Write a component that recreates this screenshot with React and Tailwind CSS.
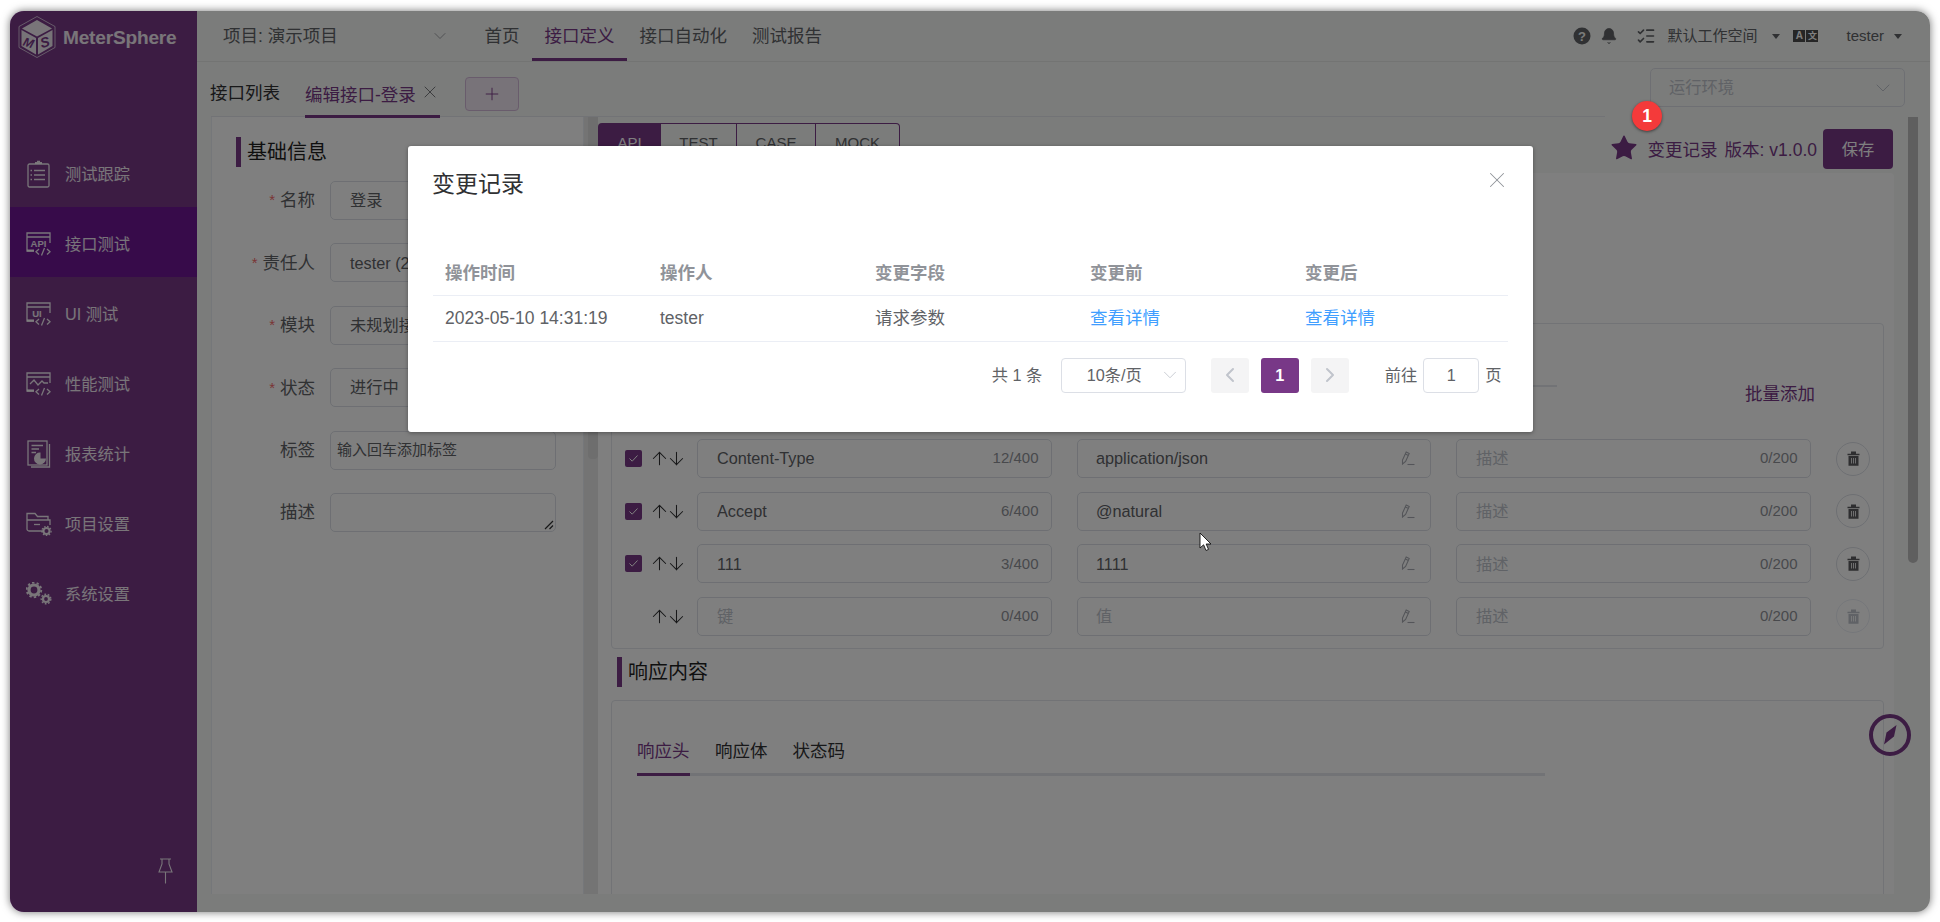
import React from "react";
import { ChevronDown, ChevronLeft, ChevronRight, X, Plus, ArrowUp, ArrowDown, Star, Bell, ListChecks } from "lucide-react";

const FONT = "font-['Liberation_Sans','Noto_Sans_CJK_SC',sans-serif]";

function Logo() {
  return (
    <svg width="40" height="44" viewBox="0 0 40 44" className="shrink-0">
      <path d="M20 1.5 L38 11.5 L38 32.5 L20 42.5 L2 32.5 L2 11.5 Z" fill="none" stroke="#fff" strokeOpacity="0.8" strokeWidth="0.8" />
      <path d="M20 5 L35 13.5 L20 21.5 L5 13.5 Z" fill="#fff" fillOpacity="0.9" />
      <path d="M4.5 15 L19 23 L19 39.5 L4.5 31 Z" fill="#fff" fillOpacity="0.88" />
      <path d="M21 23 L35.5 15 L35.5 31 L21 39.5 Z" fill="#fff" fillOpacity="0.88" />
      <text x="11.5" y="32" fontSize="12.5" fontWeight="700" fontStyle="italic" textAnchor="middle" fill="#783887" transform="rotate(18 11.5 28)" fontFamily="Liberation Sans">M</text>
      <text x="28" y="32" fontSize="14" fontWeight="700" fontStyle="italic" textAnchor="middle" fill="#783887" transform="rotate(-14 28 28)" fontFamily="Liberation Sans">S</text>
    </svg>
  );
}

const stroke = { fill: "none", stroke: "currentColor", strokeWidth: 1.3 };

function WinBase({ children }) {
  return (
    <svg width="26" height="24" viewBox="0 0 26 24">
      <path d="M8 19 H1 V1 H24 V11 M1 5 H24" {...stroke} />
      <path d="M1 18.5 H8" stroke="currentColor" strokeWidth="2.2" />
      <path d="M13 17 L10 19.7 L13 22.4 M21 17 L24 19.7 L21 22.4 M18.5 16 L15.5 23.5" {...stroke} />
      {children}
    </svg>
  );
}

const icons = {
  track: (
    <svg width="24" height="28" viewBox="0 0 24 28">
      <rect x="1" y="4" width="21" height="23" rx="1.5" {...stroke} />
      <path d="M8 4 V2 H10 V0.8 H13 V2 H15 V4 Z" fill="currentColor" />
      <path d="M7 10.5 H18 M7 15 H18 M7 19.5 H18 M3.5 10.5 H5 M3.5 15 H5 M3.5 19.5 H5" {...stroke} />
    </svg>
  ),
  api: (
    <WinBase>
      <text x="12.5" y="14.5" fontSize="9.5" fontWeight="700" textAnchor="middle" fill="currentColor" fontFamily="Liberation Sans">API</text>
    </WinBase>
  ),
  ui: (
    <WinBase>
      <text x="11" y="14.5" fontSize="9.5" fontWeight="700" textAnchor="middle" fill="currentColor" fontFamily="Liberation Sans">UI</text>
    </WinBase>
  ),
  perf: (
    <WinBase>
      <path d="M4 12 L8 8 L12 13 L16 9 L18 11 H22" {...stroke} />
    </WinBase>
  ),
  report: (
    <svg width="24" height="28" viewBox="0 0 24 28">
      <rect x="1" y="1" width="19" height="24" {...stroke} />
      <path d="M22.5 4 V27 H4" {...stroke} />
      <path d="M4.5 5.5 H16 M4.5 9 H12 M4.5 12.5 H9" {...stroke} />
      <path d="M13.5 12.5 a6 6 0 1 0 5.5 6 h-5.5 Z" fill="currentColor" />
    </svg>
  ),
  project: (
    <svg width="26" height="24" viewBox="0 0 26 24">
      <path d="M18 19 H3 a2 2 0 0 1 -2 -2 V1.5 H9 L11.5 4.5 H22 V8 M1 8 H24 L24 13" {...stroke} />
      <path d="M8 12.5 H14" {...stroke} />
      <circle cx="20.5" cy="19" r="3" fill="none" stroke="currentColor" strokeWidth="2" />
      <circle cx="20.5" cy="19" r="4.6" fill="none" stroke="currentColor" strokeWidth="1.2" strokeDasharray="1.6 1.5" />
    </svg>
  ),
  sys: (
    <svg width="26" height="24" viewBox="0 0 26 24">
      <circle cx="8" cy="8" r="5" fill="none" stroke="currentColor" strokeWidth="3.2" />
      <circle cx="8" cy="8" r="7.3" fill="none" stroke="currentColor" strokeWidth="1.8" strokeDasharray="2.4 2.2" />
      <circle cx="20" cy="17" r="3" fill="none" stroke="currentColor" strokeWidth="2.2" />
      <circle cx="20" cy="17" r="4.8" fill="none" stroke="currentColor" strokeWidth="1.4" strokeDasharray="1.8 1.6" />
    </svg>
  ),
};

function Pencil() {
  return (
    <svg width="14" height="15" viewBox="0 0 14 15" className="shrink-0 text-[#a8abb2]">
      <path d="M1.5 13 L1.5 9 L5.2 1 L8.2 2.4 L4.6 10.4 Z M4.4 3 L7.4 4.4" fill="none" stroke="currentColor" strokeWidth="1.1" />
      <path d="M6.5 13.5 H13.5" stroke="currentColor" strokeWidth="1.1" />
    </svg>
  );
}

function Trash({ light }) {
  return (
    <div className={`w-[34px] h-[34px] rounded-full border flex items-center justify-center shrink-0 ml-[25px] ${light ? "border-[#ebeef5]" : "border-[#dcdfe6]"}`}>
      <svg width="13" height="15" viewBox="0 0 13 15" className={light ? "text-[#c0c4cc]" : "text-[#5c5c60]"}>
        <path d="M0.5 2.8 H4 V0.6 H9 V2.8 H12.5 V4.2 H0.5 Z" fill="currentColor" />
        <path d="M1.5 5 H11.5 V14.8 H1.5 Z M4 7 V12.5 H4.8 V7 Z M6.1 7 V12.5 H6.9 V7 Z M8.2 7 V12.5 H9 V7 Z" fill="currentColor" fillRule="evenodd" />
      </svg>
    </div>
  );
}

function CountInput({ width, value, placeholder, count, className = "" }) {
  return (
    <div className={`h-[39px] rounded-[5px] border border-[#dcdfe6] flex items-center pl-[19px] pr-[12.5px] shrink-0 ${width} ${className}`}>
      <span className={`flex-1 truncate text-[16.25px] ${value ? "text-[#606266]" : "text-[#c0c4cc]"}`}>{value || placeholder}</span>
      <span className="text-[15px] text-[#909399]">{count}</span>
    </div>
  );
}

function ValueInput({ value, placeholder }) {
  return (
    <div className="h-[39px] w-[354px] ml-[25px] rounded-[5px] border border-[#dcdfe6] flex items-center pl-[18px] pr-[15px] shrink-0">
      <span className={`flex-1 truncate text-[16.25px] ${value ? "text-[#606266]" : "text-[#c0c4cc]"}`}>{value || placeholder}</span>
      <Pencil />
    </div>
  );
}

function KvRow({ name, count, value, checked, last }) {
  return (
    <div className="flex items-center h-[39px] pl-[13px]">
      <div className="w-[17px] shrink-0">
        {checked && (
          <div className="w-[17px] h-[17px] rounded-[2px] bg-[#783887] flex items-center justify-center">
            <svg width="11" height="9" viewBox="0 0 11 9"><path d="M1.5 4.5 L4.2 7.2 L9.5 1.5" fill="none" stroke="#fff" strokeWidth="1" /></svg>
          </div>
        )}
      </div>
      <div className="flex items-center ml-[9px] w-[46px] shrink-0 text-[#303133]">
        <ArrowUp size={21} strokeWidth={1.2} className="-mx-[2px] shrink-0" />
        <ArrowDown size={21} strokeWidth={1.2} className="-mx-[2px] shrink-0" />
      </div>
      <CountInput width="w-[355px]" value={name} placeholder="键" count={count} />
      <ValueInput value={value} placeholder="值" />
      <CountInput width="w-[355px] ml-[25px]" placeholder="描述" count="0/200" />
      <Trash light={last} />
    </div>
  );
}

function FormRow({ label, required, children }) {
  return (
    <div className="flex items-center h-[39px]">
      <label className="w-[103px] shrink-0 text-right text-[17.5px] text-[#606266] mr-[15px] whitespace-nowrap">
        {required && <span className="text-[#f56c6c] text-[15px] mr-[5px] align-[1px]">*</span>}
        {label}
      </label>
      <div className="flex-1 h-full rounded-[5px] border border-[#dcdfe6] flex items-center pl-[19px] text-[16.25px] text-[#606266] overflow-hidden whitespace-nowrap relative">
        {children}
      </div>
    </div>
  );
}

function SectionTitle({ children, className = "" }) {
  return (
    <div className={`flex items-center h-[30px] ${className}`}>
      <div className="w-[5px] h-[30px] bg-[#783887]" />
      <span className="ml-[6px] text-[20px] text-[#1f1f1f]">{children}</span>
    </div>
  );
}

const navItems = [
  ["track", "测试跟踪"],
  ["api", "接口测试"],
  ["ui", "UI 测试"],
  ["perf", "性能测试"],
  ["report", "报表统计"],
  ["project", "项目设置"],
  ["sys", "系统设置"],
];

export default function App() {
  return (
    <div className={`w-[1940px] h-[922px] bg-white pt-[11px] pb-[10px] px-[10px] overflow-hidden ${FONT}`}>
      <div className="relative h-[901px] rounded-[14px] shadow-[0_0_9px_rgba(0,0,0,0.55)] overflow-hidden flex bg-[#f6f8f6]">
        {/* Sidebar */}
        <aside className="w-[187px] shrink-0 bg-[#783887] flex flex-col text-white/90">
          <div className="h-[126px] flex items-start pl-[7px] pt-[4px] gap-[6px]">
            <Logo />
            <span className="mt-[11px] text-[19.1px] font-bold text-white/90 leading-[24px] tracking-[-0.2px]">MeterSphere</span>
          </div>
          {navItems.map(([k, label], i) => (
            <div key={k} className={`h-[70px] pt-[4px] flex items-center ${i === 1 ? "bg-[#6e1694]" : ""}`}>
              <div className="w-[55px] flex justify-center pl-[3px]">{icons[k]}</div>
              <span className="text-[16.25px]">{label}</span>
            </div>
          ))}
          <div className="mt-auto flex justify-end pr-[24.5px] pb-[28px]">
            <svg width="15" height="26" viewBox="0 0 15 26">
              <path d="M2 1 H13 M4 1 V6 L1 14 H14 L11 6 V1 M7.5 14 V25.5" fill="none" stroke="currentColor" strokeWidth="1.1" />
            </svg>
          </div>
        </aside>

        {/* Main */}
        <div className="flex-1 min-w-0 flex flex-col">
          <header className="h-[51px] shrink-0 border-b border-[#e6e8e6] flex items-center pl-[26px] pr-[28px] text-[#303133] bg-[#f6f8f6]">
            <div className="w-[225px] flex items-center text-[17.5px] text-[#606266] shrink-0">
              <span className="flex-1">项目: 演示项目</span>
              <ChevronDown size={20} strokeWidth={1} className="text-[#909399] -mr-[2px]" />
            </div>
            <nav className="flex h-full ml-[24px] text-[17.5px] text-[#606266]">
              <span className="px-[12.5px] flex items-center">首页</span>
              <span className="px-[12.5px] flex items-center text-[#783887] border-b-[3px] border-[#783887] pt-[3px]">接口定义</span>
              <span className="px-[12.5px] flex items-center">接口自动化</span>
              <span className="px-[12.5px] flex items-center">测试报告</span>
            </nav>
            <div className="ml-auto flex items-center text-[#606266]">
              <svg width="18" height="18" viewBox="0 0 18 18"><circle cx="9" cy="9" r="8.5" fill="currentColor" /><text x="9" y="13.5" fontSize="13" fontWeight="700" textAnchor="middle" fill="#f6f8f6" fontFamily="Liberation Sans">?</text></svg>
              <Bell size={18} fill="currentColor" strokeWidth={1} className="ml-[9.5px]" />
              <ListChecks size={20} strokeWidth={2} className="ml-[17.5px]" />
              <span className="ml-[11.5px] text-[15px]">默认工作空间</span>
              <div className="ml-[14.5px] w-0 h-0 border-x-[4.5px] border-x-transparent border-t-[5px] border-t-[#606266]" />
              <div className="ml-[13.5px] flex gap-[1px] h-[12px] w-[25px]">
                <span className="flex-1 bg-[#4c4c4c] text-center text-[10px] leading-[12px] font-bold text-white">A</span>
                <span className="flex-1 bg-[#4c4c4c] text-center text-[9px] leading-[12px] font-bold text-white">文</span>
              </div>
              <span className="ml-[28px] text-[15px]">tester</span>
              <div className="ml-[10px] w-0 h-0 border-x-[4.5px] border-x-transparent border-t-[5px] border-t-[#606266]" />
            </div>
          </header>

          <div className="flex-1 min-h-0 flex flex-col pl-[14px] pb-[18px]">
            {/* Tab bar */}
            <div className="h-[55px] shrink-0 flex">
              <div className="w-[1394px] flex items-start border-b-[1px] border-[#e4e7ed]">
                <span className="text-[17.5px] text-[#303133] ml-[-1px] mt-[19px] leading-[24px]">接口列表</span>
                <div className="ml-[25px] mt-[21px] h-[35px] flex items-start border-b-[3px] border-[#783887] w-[135px] relative">
                  <span className="text-[17.5px] text-[#783887] leading-[24px]">编辑接口-登录</span>
                  <X size={20} strokeWidth={1} className="ml-[4px] -mt-[1px] text-[#606266]" />
                </div>
                <div className="ml-[25px] mt-[15px] w-[54px] h-[34px] rounded-[4px] border border-[#d3b8d9] bg-[#f0e6f2] flex items-center justify-center text-[#783887]">
                  <Plus size={20} strokeWidth={1.1} />
                </div>
              </div>
              <div className="ml-[45px] mt-[6px] w-[255px] h-[39px] rounded-[5px] border border-[#dcdfe6] flex items-center pl-[18px] pr-[9px] text-[16.25px] text-[#c0c4cc]">
                <span className="flex-1">运行环境</span>
                <ChevronDown size={24} strokeWidth={1} />
              </div>
            </div>

            <div className="flex-1 min-h-0 flex">
              {/* Left form panel */}
              <div className="w-[373px] shrink-0 bg-white border-x border-[#ebeef5] pt-[20px] pl-[24px] pr-[27px]">
                <SectionTitle>基础信息</SectionTitle>
                <div className="mt-[14px] flex flex-col gap-[23.4px] ml-[-24px]">
                  <FormRow label="名称" required>登录</FormRow>
                  <FormRow label="责任人" required>tester (2)</FormRow>
                  <FormRow label="模块" required>未规划接口</FormRow>
                  <FormRow label="状态" required>进行中</FormRow>
                  <FormRow label="标签"><span className="ml-[-13px] text-[15px]">输入回车添加标签</span></FormRow>
                  <FormRow label="描述">
                    <svg width="10" height="10" viewBox="0 0 10 10" className="absolute right-[1px] bottom-[1px] text-[#303133]"><path d="M1 9 L9 1 M5.5 9 L9 5.5" stroke="currentColor" strokeWidth="1.2" /></svg>
                  </FormRow>
                </div>
              </div>
              {/* Left scrollbar */}
              <div className="w-[14px] shrink-0 bg-[#e8e8e8] pl-[4px]">
                <div className="h-[342px] bg-[#dcdcdc] rounded-b-[4px]" />
              </div>

              {/* Right panel */}
              <div className="w-[1296px] shrink-0 flex flex-col">
                <div className="h-[56px] shrink-0 flex justify-between items-start pr-[1px]">
                  <div className="flex mt-[6px] h-[40px] text-[15px] text-[#606266]">
                    <span className="w-[63px] bg-[#783887] text-white flex items-center justify-center rounded-l-[4px]">API</span>
                    <span className="w-[76px] border border-l-0 border-[#783887] flex items-center justify-center">TEST</span>
                    <span className="w-[79px] border border-l-0 border-[#783887] flex items-center justify-center">CASE</span>
                    <span className="w-[84px] border border-l-0 border-[#783887] flex items-center justify-center rounded-r-[4px]">MOCK</span>
                  </div>
                  <div className="flex items-start mt-[12px]">
                    <Star size={30} fill="#783887" strokeWidth={0} className="text-[#783887] mt-[4px]" />
                    <span className="ml-[9px] mt-[9px] leading-[24px] text-[17.5px] text-[#783887] whitespace-nowrap">变更记录<span className="ml-[7px]">版本: v1.0.0</span></span>
                    <div className="ml-[6px] w-[70px] h-[40px] rounded-[4px] bg-[#783887] text-white text-[16.25px] flex items-center justify-center">保存</div>
                  </div>
                </div>

                <div className="flex-1 min-h-0 bg-white rounded-t-[4px] pl-[13px] pr-[10px] overflow-hidden">
                  <div className="mt-[150px] h-[326px] border border-[#e4e7ed] rounded-[4px] relative flex flex-col">
                    <div className="mt-[50px] flex items-center h-[24px] pl-[23px] pr-[68px]">
                      <div className="w-[921.5px] self-start mt-[11px] h-[2px] bg-[#e4e7ed]" />
                      <span className="ml-auto mt-[16px] text-[17.5px] text-[#783887]">批量添加</span>
                    </div>
                    <div className="mt-[41px] flex flex-col gap-[13.67px]">
                      <KvRow name="Content-Type" count="12/400" value="application/json" checked />
                      <KvRow name="Accept" count="6/400" value="@natural" checked />
                      <KvRow name="111" count="3/400" value="1111" checked />
                      <KvRow count="0/400" last />
                    </div>
                  </div>
                  <SectionTitle className="mt-[8px] ml-[6px]">响应内容</SectionTitle>
                  <div className="mt-[13px] h-[300px] border border-[#e4e7ed] rounded-[4px] pt-[38px] pl-[25px]">
                    <div className="flex w-[908px] h-[37px] border-b-[3px] border-[#e4e7ed] text-[17.5px] text-[#303133]">
                      <span className="w-[53px] h-[37px] border-b-[3px] border-[#783887] text-[#783887] leading-[24px] whitespace-nowrap">响应头</span>
                      <span className="ml-[25px] leading-[24px]">响应体</span>
                      <span className="ml-[25px] leading-[24px]">状态码</span>
                    </div>
                  </div>
                </div>
              </div>

              {/* Right scrollbar */}
              <div className="flex-1 pl-[14px]">
                <div className="w-[10px] h-[446px] bg-[#bebebe] rounded-b-[5px]" />
              </div>
            </div>
          </div>
        </div>

        {/* Compass floats over the page */}
        <div className="absolute left-[1859px] top-[703px] w-[42px] h-[42px] rounded-full border-[4px] border-[#783887] flex items-center justify-center">
          <svg width="18" height="22" viewBox="0 0 18 22"><path d="M15.5 1 L13 12.5 L3 20.5 L5.5 8.5 Z" fill="#783887" /></svg>
        </div>

        {/* Dim overlay */}
        <div className="absolute inset-0 bg-black/50" />

        {/* Modal */}
        <div className="absolute left-[398px] top-[135px] w-[1125px] h-[286px] bg-white rounded-[3px] shadow-[0_1px_4px_rgba(0,0,0,0.35)]">
          <div className="flex items-center justify-between pl-[24px] pr-[23px] pt-[23px] h-[53px]">
            <span className="text-[23px] text-[#303133] leading-[30px]">变更记录</span>
            <X size={26} strokeWidth={0.95} className="text-[#909399] -mt-[8px]" />
          </div>
          <div className="mt-[51px] mx-[25px] text-[17.5px]">
            <div className="grid grid-cols-5 h-[46px] items-center border-b border-[#ebeef5] font-bold text-[#909399]">
              {["操作时间", "操作人", "变更字段", "变更前", "变更后"].map((h) => (
                <div key={h} className="pl-[12px] text-[17.5px] leading-[24px]">{h}</div>
              ))}
            </div>
            <div className="grid grid-cols-5 h-[46px] items-center border-b border-[#ebeef5] text-[#606266]">
              <div className="pl-[12px] text-[17.5px]">2023-05-10 14:31:19</div>
              <div className="pl-[12px]">tester</div>
              <div className="pl-[12px]">请求参数</div>
              <div className="pl-[12px] text-[#409eff]">查看详情</div>
              <div className="pl-[12px] text-[#409eff]">查看详情</div>
            </div>
          </div>
          <div className="mt-[15.5px] flex items-center justify-end pr-[31.5px] h-[35px] text-[16.25px] text-[#606266]">
            <span>共 1 条</span>
            <div className="ml-[18.5px] w-[125px] h-[35px] rounded-[4px] border border-[#dcdfe6] flex items-center pl-[25px] pr-[4px]">
              <span className="flex-1">10条/页</span>
              <ChevronDown size={22} strokeWidth={0.9} className="text-[#c0c4cc]" />
            </div>
            <div className="ml-[25px] w-[38px] h-[35px] rounded-[3px] bg-[#f4f4f5] flex items-center justify-center text-[#c0c4cc]"><ChevronLeft size={24} strokeWidth={2} /></div>
            <div className="ml-[12px] w-[38px] h-[35px] rounded-[3px] bg-[#783887] flex items-center justify-center text-white font-bold text-[16.25px]">1</div>
            <div className="ml-[12px] w-[38px] h-[35px] rounded-[3px] bg-[#f4f4f5] flex items-center justify-center text-[#c0c4cc]"><ChevronRight size={24} strokeWidth={2} /></div>
            <span className="ml-[36px]">前往</span>
            <div className="ml-[6px] w-[56px] h-[35px] rounded-[4px] border border-[#dcdfe6] flex items-center justify-center">1</div>
            <span className="ml-[6px]">页</span>
          </div>
        </div>

        {/* Badge */}
        <div className="absolute left-[1622px] top-[90px] w-[30px] h-[30px] rounded-full bg-[#f43a3a] shadow-[0_1px_3px_rgba(0,0,0,0.5)] flex items-center justify-center text-white font-bold text-[17.5px]">1</div>

        {/* Mouse cursor */}
        <svg width="14" height="21" viewBox="0 0 14 21" className="absolute left-[1189px] top-[521px]">
          <path d="M1 1 V16 L4.6 12.8 L7 18.5 L9.5 17.4 L7.2 12 H12 Z" fill="#fff" stroke="#111" strokeWidth="0.9" />
        </svg>
      </div>
    </div>
  );
}
